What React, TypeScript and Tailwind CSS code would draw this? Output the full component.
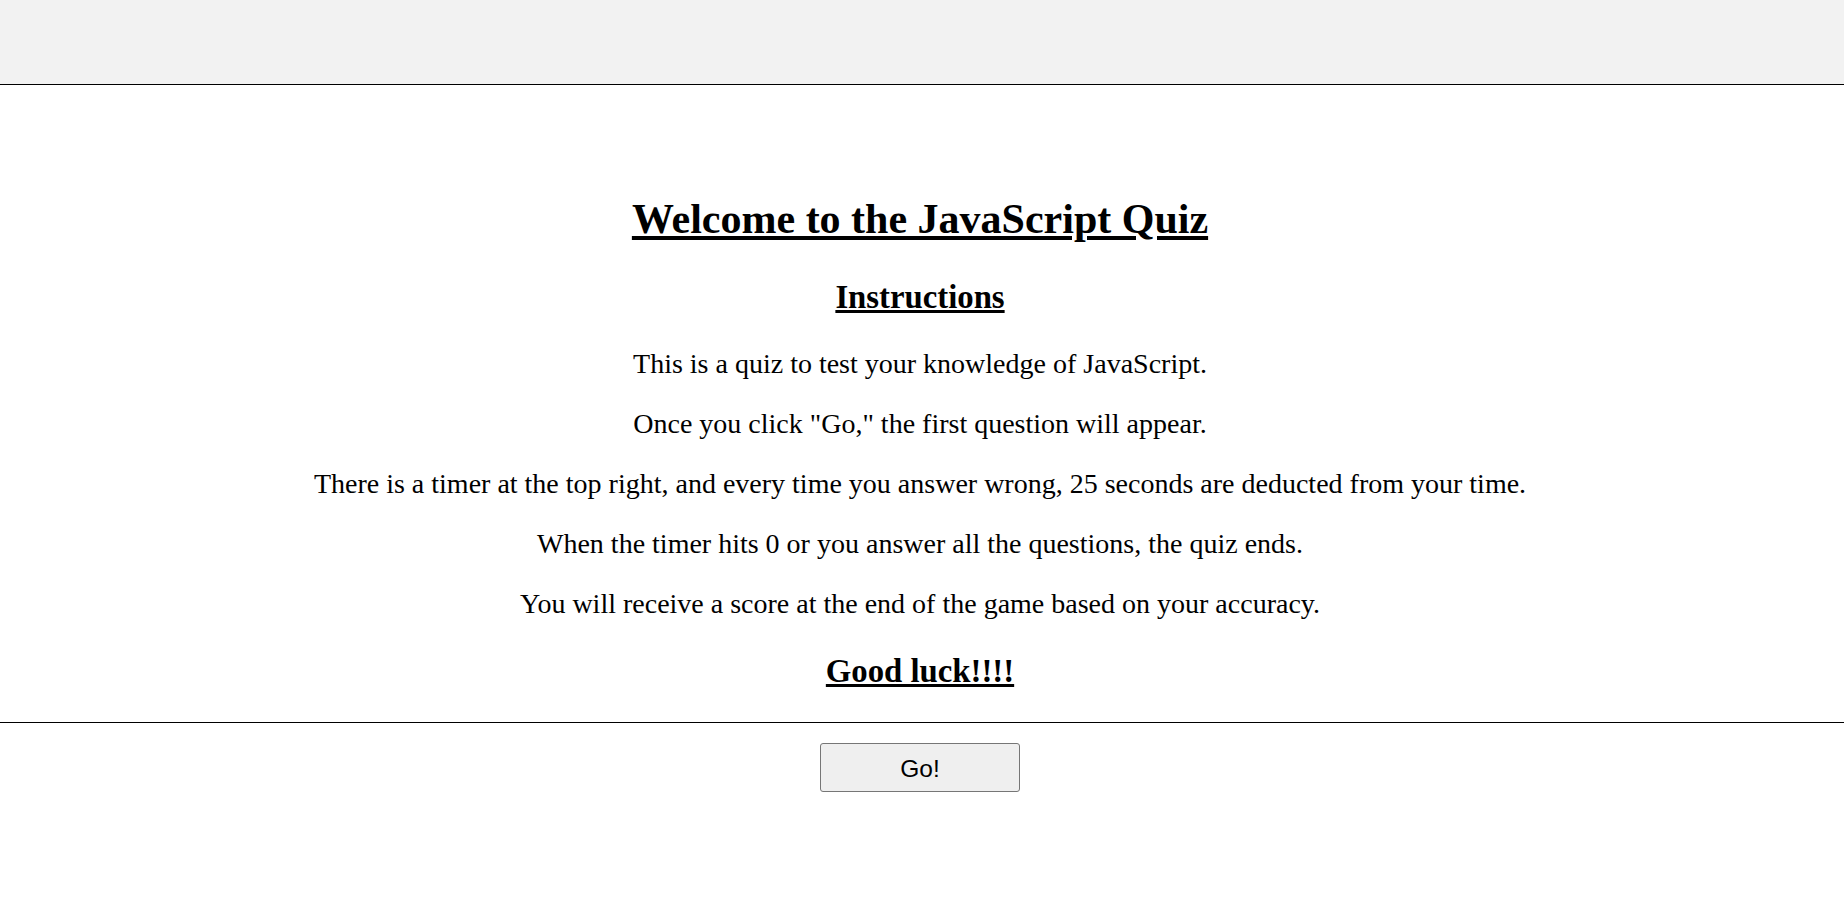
export default function App() {
  const serif = "font-['Liberation_Serif','Times_New_Roman',serif]";
  return (
    <div className={`w-[1844px] min-h-[916px] bg-white text-black ${serif}`}>
      <header className="h-[85px] bg-[#f2f2f2] border-b border-black" />
      <section className="border-b border-black pt-[110px] pb-[32px] pr-[4px] text-center">
        <h1 className="text-[42px] leading-[48px] font-bold underline mb-[35px]">
          Welcome to the JavaScript Quiz
        </h1>
        <h3 className="text-[32.76px] leading-[38px] font-bold underline mb-[32px]">
          Instructions
        </h3>
        <div className="flex flex-col gap-[28px] text-[28px] leading-[32px]">
          <p>This is a quiz to test your knowledge of JavaScript.</p>
          <p>Once you click "Go," the first question will appear.</p>
          <p>
            There is a timer at the top right, and every time you answer wrong, 25 seconds are
            deducted from your time.
          </p>
          <p>When the timer hits 0 or you answer all the questions, the quiz ends.</p>
          <p>You will receive a score at the end of the game based on your accuracy.</p>
        </div>
        <h3 className="text-[32.76px] leading-[38px] font-bold underline mt-[32px]">
          Good luck!!!!
        </h3>
      </section>
      <div className="flex justify-center pr-[4px] pt-[20px]">
        <button className="w-[200px] h-[49px] border border-[#767676] bg-[#efefef] rounded-[3px] pt-[3px] text-[24.5px] text-black font-['Liberation_Sans',Arial,sans-serif]">
          Go!
        </button>
      </div>
    </div>
  );
}
